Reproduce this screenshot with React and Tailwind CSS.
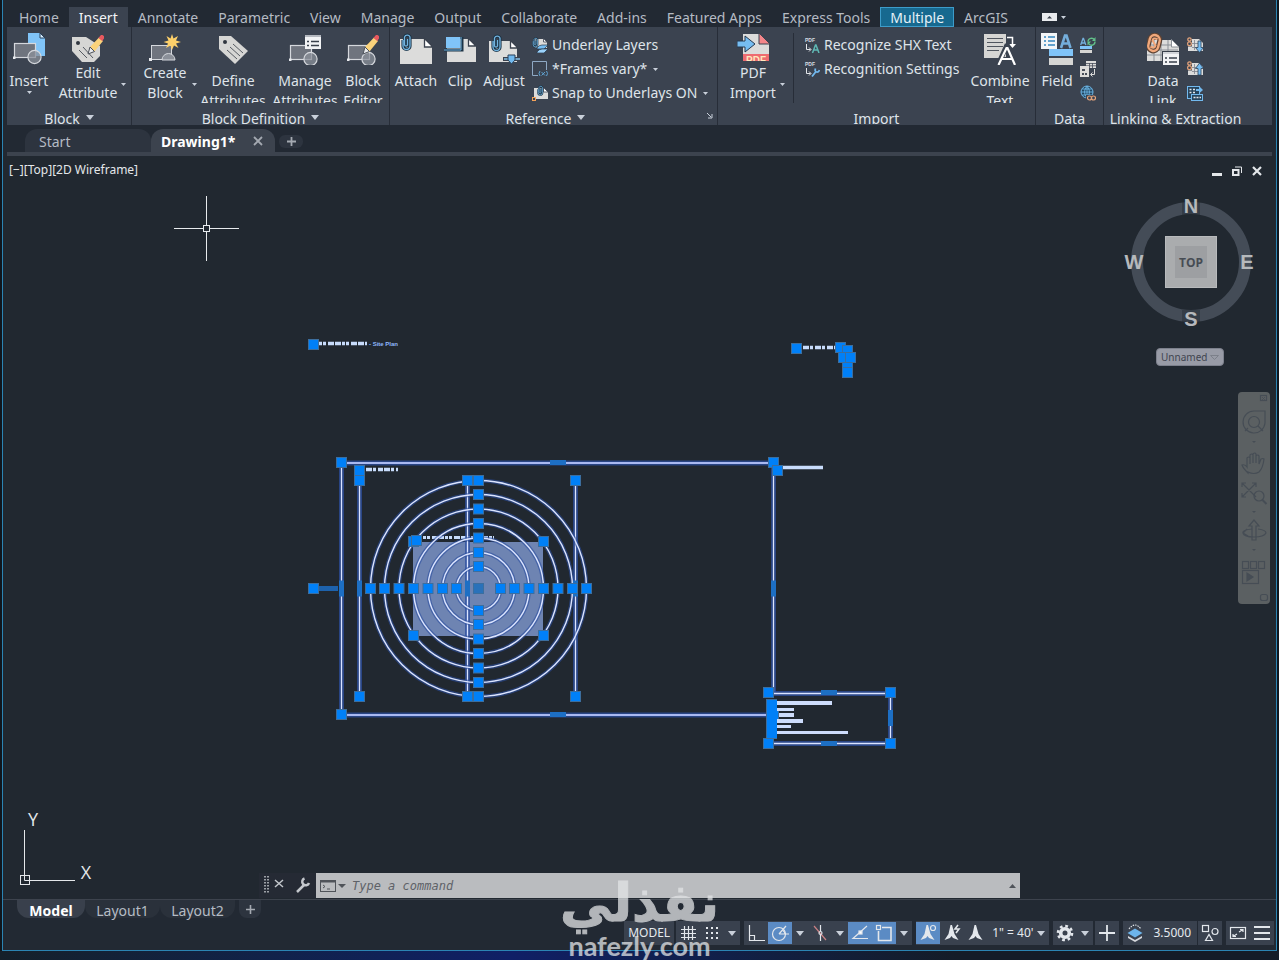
import { useState } from "react";

const tabs = [
  "Home",
  "Insert",
  "Annotate",
  "Parametric",
  "View",
  "Manage",
  "Output",
  "Collaborate",
  "Add-ins",
  "Featured Apps",
  "Express Tools",
  "Multiple",
  "ArcGIS",
];

/* ---------- small shared pieces ---------- */

function Caret({ className = "" }) {
  return (
    <svg className={`shrink-0 fill-[#c9d0da] ${className}`} width="8" height="5" viewBox="0 0 8 5">
      <path d="M0 0h8L4 5z" />
    </svg>
  );
}

function SmallCaret({ className = "" }) {
  return (
    <svg className={`shrink-0 fill-[#c9d0da] ${className}`} width="5" height="3" viewBox="0 0 5 3">
      <path d="M0 0h5L2.5 3z" />
    </svg>
  );
}

function Icon({ children, size = 32 }) {
  return (
    <svg className="shrink-0" width={size} height={size} viewBox={`0 0 ${size} ${size}`} fill="none">
      {children}
    </svg>
  );
}

/* ---------- ribbon icons ---------- */

function BlockShape({ y = 0 }) {
  return (
    <g transform={`translate(0 ${y})`} stroke="#d5d8dd" strokeWidth="1.2">
      <rect x="1.5" y="11.5" width="21" height="14" fill="#6f747e" />
      <circle cx="21.5" cy="25" r="6.6" fill="#8b9099" fillOpacity="0.75" />
      <rect x="0" y="24.5" width="2.5" height="2.5" fill="#e8eaee" stroke="none" />
    </g>
  );
}

function Pencil() {
  return (
    <g>
      <path d="M16 21l2-7L27 4.500l4 3.500-8.500 10.500z" fill="#fbd37b" />
      <path d="M16 21l2-7 4.500 4.500z" fill="#e9ebee" stroke="#4a505b" />
      <path d="M26.500 5l2-2.500c1.500-1.500 5 1 3.500 3l-1.800 2.500z" fill="#e8595f" />
    </g>
  );
}

function Clip({ x = 0, y = 0, s = 1 }) {
  return (
    <g transform={`translate(${x} ${y}) scale(${s})`} fill="none">
      <path d="M2 7v6a3.500 3.500 0 0 0 7 0V4a3 3 0 0 0-5.500 0v8a1.600 1.600 0 0 0 3 0V6" stroke="#1d3345" strokeWidth="3.200" />
      <path d="M2 7v6a3.500 3.500 0 0 0 7 0V4a3 3 0 0 0-5.500 0v8a1.600 1.600 0 0 0 3 0V6" stroke="#72b4e0" strokeWidth="1.300" />
    </g>
  );
}

function Tag() {
  return (
    <Icon>
      <path d="M2 3h12l17 15-13 13L2 16z" fill="#d6d6d4" />
      <circle cx="8" cy="9" r="2" fill="#30363f" />
      <path d="M10 17l10 9M13 14l10 9M16 11l10 9" stroke="#565b62" strokeWidth="1" />
    </Icon>
  );
}

function InsertIcon() {
  return (
    <Icon>
      <path d="M15 0h12l5 5v18H15z" fill="#80c4f8" />
      <path d="M27 0v5h5z" fill="#d8efff" stroke="#29405a" />
      <BlockShape y={-1} />
    </Icon>
  );
}

function EditAttributeIcon() {
  return (
    <Icon>
      <path d="M0 4h14l14 9v10l-6 6H10L0 18z" fill="#d6d6d4" />
      <circle cx="6" cy="10" r="2" fill="#30363f" />
      <path d="M7 17l8 8M11 14l10 11" stroke="#565b62" />
      <Pencil />
    </Icon>
  );
}

function CreateBlockIcon() {
  return (
    <Icon>
      <rect x="2.500" y="12.500" width="20" height="14" fill="#6f747e" stroke="#d5d8dd" />
      <path d="M13 27a6.500 6.500 0 0 1 13 0z" fill="#8b9099" stroke="#d5d8dd" />
      <rect x="0" y="25" width="3" height="3" fill="#e8eaee" />
      <path d="M23 1l1.500 4.500L29 3l-2 4.500 5 1.500-5 1.500L29.500 15 25 12.500 23 17l-1.500-4.500L17 15l2-4.500L14.500 9l5-1.500L17.500 3 21.500 5.500z" fill="#fdd06a" />
    </Icon>
  );
}

function ManageIcon() {
  return (
    <Icon>
      <BlockShape y={1} />
      <rect x="16" y="2" width="16" height="14" fill="#f2f3f5" />
      <path d="M16 3h16" stroke="#b4b8bf" strokeWidth="2" />
      <path d="M18 8.500h2M22 8.500h8M18 12.500h2M22 12.500h8" stroke="#39404b" strokeWidth="1.400" />
    </Icon>
  );
}

function BlockEditorIcon() {
  return (
    <Icon>
      <BlockShape y={1} />
      <Pencil />
    </Icon>
  );
}

function AttachIcon() {
  return (
    <Icon>
      <path d="M0 6h25l7 7v18H0z" fill="#dcdcdb" />
      <path d="M24.500 5.500v8.500H33z" fill="#fff" stroke="#3a414d" strokeWidth="1.300" />
      <Clip x={1} y={0} />
    </Icon>
  );
}

function ClipIcon() {
  return (
    <Icon>
      <path d="M3 6h22l7 7v16H3z" fill="#dcdcdb" />
      <path d="M24.500 5.500v7.500H32z" fill="#fff" stroke="#3a414d" strokeWidth="1.300" />
      <rect x="2" y="4" width="14" height="11" fill="#80c4f8" />
      <path d="M0 17h18V4" stroke="#1d3345" strokeWidth="3" />
      <path d="M0 17h17V4" stroke="#72b4e0" />
    </Icon>
  );
}

function AdjustIcon() {
  return (
    <Icon>
      <path d="M1 8h21l7 6v15H1z" fill="#dcdcdb" />
      <path d="M22.500 7.500v7.500H30z" fill="#fff" stroke="#3a414d" strokeWidth="1.300" />
      <path d="M15 26h17" stroke="#3a414d" strokeWidth="4" />
      <path d="M16 26h16" stroke="#8dccf5" strokeWidth="1.400" />
      <path d="M20 22h7v5l-3.500 4-3.500-4z" fill="#72b9ee" stroke="#28415a" />
      <Clip x={3} y={1} />
    </Icon>
  );
}

function PdfIcon() {
  return (
    <Icon>
      <path d="M6 1h16l10 9v12H6z" fill="#dcdcdb" />
      <path d="M22 0v11h11z" fill="#f4868a" stroke="#3b4350" />
      <rect x="6" y="21" width="26" height="7" fill="#ee6b70" />
      <text x="9" y="31" fontSize="10" fill="#ffe7bd" fontFamily="Liberation Sans" fontWeight="bold">PDF</text>
      <path d="M0 8h8V3l10 8-10 8v-5H0z" fill="#76bdf2" stroke="#263a50" />
      <rect x="0" y="28" width="32" height="4" fill="#3b4350" />
    </Icon>
  );
}

function CombineIcon() {
  return (
    <Icon>
      <rect x="0" y="1" width="22" height="24" fill="#d6d6d4" />
      <path d="M3 5.500h16M3 9.500h16M3 13.500h16M3 17.500h12" stroke="#50565f" />
      <path d="M23 4.500h5.500V13" stroke="#fff" strokeWidth="1.500" />
      <path d="M25 11h7l-3.500 4z" fill="#fff" />
      <path d="M13.500 33L22.500 13h1L32 33M17 26.500h12" stroke="#3b4350" strokeWidth="5" />
      <path d="M14.500 32L22.500 15h1L31 32M18 26h10" stroke="#fff" strokeWidth="2.200" />
    </Icon>
  );
}

function FieldIcon() {
  return (
    <Icon>
      <rect x="0" y="0" width="16" height="16" fill="#f3f5f7" />
      <path d="M3 4h2M7 4h7M3 8h2M7 8h7M3 12h2M7 12h7" stroke="#3585bf" strokeWidth="1.600" />
      <path d="M20 15l4-12.500h1.500L29.500 15M21.500 10.500h7" stroke="#74aedb" strokeWidth="2.600" />
      <rect x="8" y="16" width="24" height="7" fill="#80c4f8" />
      <rect x="8" y="25" width="24" height="7" fill="#d6d6d4" />
    </Icon>
  );
}

function DataLinkIcon() {
  return (
    <Icon>
      <path d="M0 7h24l8 7v14H0z" fill="#dcdcdb" />
      <path d="M0 12h24M0 17h31M0 22h31M7 7v21M14 7v21M21 7v21" stroke="#8a8f96" />
      <path d="M24.500 6.500V14H32z" fill="#fff" stroke="#8a8f96" />
      <g transform="rotate(14 7 10)">
        <rect x="2" y="2" width="10" height="16" rx="5" stroke="#5d4334" strokeWidth="5" />
        <rect x="2" y="2" width="10" height="16" rx="5" stroke="#f1a87b" strokeWidth="2.400" />
        <path d="M9.500 5.500q-5-1-4.500 2.500l4 4q0 3.500-4.500 2.500" stroke="#f1a87b" strokeWidth="2" />
      </g>
      <rect x="15.500" y="18.500" width="17" height="14" fill="#f2f3f5" stroke="#39404b" />
      <path d="M16 20h16" stroke="#b4b8bf" />
      <path d="M18 25h2M22 25h8M18 29h2M22 29h8" stroke="#39404b" strokeWidth="1.400" />
    </Icon>
  );
}

function UnderlayLayersIcon() {
  return (
    <Icon size={16}>
      <path d="M3 2h9l3 3v6H3z" fill="#dcdcdb" />
      <path d="M11.500 1.500V5H15z" fill="#fff" stroke="#3b4350" strokeWidth="0.800" />
      <path d="M5 11q2-3 5-3h6l-4 4H5z" fill="#76bdf2" stroke="#22384c" strokeWidth="0.700" />
      <path d="M5 15q2-3 5-3h6l-4 4H5z" fill="#9ad1fa" stroke="#22384c" strokeWidth="0.700" />
      <Clip x={0} y={0} s={0.6} />
    </Icon>
  );
}

function FramesIcon() {
  return (
    <Icon size={16}>
      <path d="M6 14.500H.5V.500h14V9" stroke="#8fa9c4" />
      <path d="M8 10q-2 2.500 0 5M14.500 10q2 2.500 0 5M9.500 11l3.500 3.500M13 11l-3.500 3.500" stroke="#5fa3d2" />
    </Icon>
  );
}

function SnapIcon() {
  return (
    <Icon size={16}>
      <path d="M2 3h10l4 4v7H2z" fill="#dcdcdb" />
      <path d="M11.500 2.500V7H16z" fill="#fff" stroke="#3b4350" strokeWidth="0.800" />
      <rect x="0.500" y="12.500" width="3" height="3" fill="#3b4350" stroke="#f4a259" />
      <Clip x={5} y={0} s={0.6} />
    </Icon>
  );
}

function ShxIcon({ wrench }) {
  return (
    <Icon size={16}>
      <text x="1" y="5" fontSize="5" fontWeight="bold" fill="#d8dce2" fontFamily="Liberation Sans">PDF</text>
      <path d="M2.500 7v5.500h4M5 10.500l2 2-2 2" stroke="#e3e6ea" />
      {wrench ? (
        <path d="M8 15.500l4-5M11.500 7.500q-1 3 1 3.500t3-2" stroke="#72b9ee" strokeWidth="1.800" />
      ) : (
        <path d="M8.500 16l3-8h.5l3 8M9.500 13h5" stroke="#5fb8b4" strokeWidth="1.500" />
      )}
    </Icon>
  );
}

function UpdateFieldIcon() {
  return (
    <Icon size={16}>
      <path d="M.700 8L3 1.500h.500L5.800 8M1.500 6h3.500" stroke="#74aedb" strokeWidth="1.300" />
      <path d="M8 4.500a3.500 3.500 0 0 1 6.500-1.500M15 4.500a3.500 3.500 0 0 1-6.500 2" stroke="#62c08a" strokeWidth="1.300" />
      <path d="M15.500 0v4H12zM7.500 8.500v-4H11z" fill="#62c08a" />
      <rect x="0" y="9" width="12" height="3" fill="#80c4f8" />
      <rect x="0" y="13" width="12" height="3" fill="#d6d6d4" />
    </Icon>
  );
}

function OleIcon() {
  return (
    <Icon size={16}>
      <rect x="6" y="0" width="10" height="7" fill="#dcdcdb" />
      <path d="M6 2.500h10M6 4.800h10M9.500 2v5M12.500 2v5" stroke="#474e5a" strokeWidth="0.800" />
      <rect x="0" y="5" width="9" height="11" fill="#dcdcdb" />
      <path d="M2 8h3v2H2zM2 12h2v2H2zM5 12h2v2H5z" fill="#474e5a" />
      <path d="M14.500 8v5.500H11M12.500 11.500l-2 2 2 2" stroke="#dcdcdb" />
    </Icon>
  );
}

function HyperlinkIcon() {
  return (
    <Icon size={16}>
      <circle cx="7" cy="7" r="6" fill="#23465f" stroke="#6cb4e4" />
      <path d="M1 7h12M7 1v12M2 4h10M2 10h10M7 1q-5 6 0 12M7 1q5 6 0 12" stroke="#6cb4e4" strokeWidth="0.900" />
      <rect x="6" y="10" width="10" height="6" fill="#3b4350" />
      <circle cx="9.500" cy="13" r="2" stroke="#e5a47b" strokeWidth="1.200" />
      <circle cx="13.500" cy="13" r="2" stroke="#e5a47b" strokeWidth="1.200" />
    </Icon>
  );
}

function LinkTransferIcon({ up }) {
  return (
    <Icon size={16}>
      <path d="M1 2h11l4 4v8H1z" fill="#dcdcdb" />
      <path d="M5 6.500h8M5 10.500h8M7.500 3v10" stroke="#7d828a" strokeWidth="0.800" />
      <rect x="0" y="0" width="5" height="9.500" fill="#3b4350" />
      <circle cx="2.500" cy="2.500" r="1.700" stroke="#e5a47b" strokeWidth="1.200" />
      <circle cx="2.500" cy="6.700" r="1.900" stroke="#e5a47b" strokeWidth="1.200" />
      {up ? (
        <path d="M11 14V7.500H8.500L12.500 2l4 5.500H14V14z" fill="#76bdf2" stroke="#2a415a" strokeWidth="0.800" />
      ) : (
        <path d="M11 4v6.500H8.500l4 5 4-5H14V4z" fill="#76bdf2" stroke="#2a415a" strokeWidth="0.800" />
      )}
    </Icon>
  );
}

function ExtractIcon() {
  return (
    <Icon size={16}>
      <rect x="0.500" y="1.500" width="12" height="12" fill="#27455d" stroke="#72b9ee" />
      <path d="M2.500 4.500h2M6 4.500h2M2.500 7.500h2M6 7.500h2" stroke="#e3e6ea" strokeWidth="1.500" />
      <path d="M9 4h3V1l4 4-4 3.500V6H9z" fill="#72b9ee" />
      <rect x="4.500" y="9.500" width="11" height="6" fill="#27455d" stroke="#72b9ee" />
      <path d="M6.500 12.500h2M9.500 12.500h2M12.500 12.500h1.500" stroke="#e3e6ea" strokeWidth="1.500" />
    </Icon>
  );
}

/* ---------- ribbon ---------- */

function Panel({ title, caret, launcher, className, children }) {
  return (
    <section className={`relative flex flex-col border-r border-[#272d38] ${className}`}>
      <div className="flex h-[76px] overflow-hidden pt-1.5">{children}</div>
      <div
        className={`mt-1 flex h-[17px] items-start justify-center gap-1.5 overflow-hidden leading-6 ${launcher ? "pr-4" : ""}`}
      >
        <span>{title}</span>
        {caret && <Caret className="mt-2" />}
      </div>
      {launcher && (
        <button aria-label={`${title} settings`} className="absolute right-1 bottom-1.5">
          <svg width="7" height="7" viewBox="0 0 7 7" fill="none" stroke="#c9d0da">
            <path d="M1 1l4 4M6 2v4H2" />
          </svg>
        </button>
      )}
    </section>
  );
}

// tight = icon sits close to a two-line label, otherwise the second line runs under the panel title
function BigButton({ icon, lines, tight, caret, below, className }) {
  return (
    <>
      <button className={`flex shrink-0 flex-col items-center leading-5 ${className}`}>
        {icon}
        <span className={tight ? "-mt-0.5 block" : "mt-1.5 block"}>
          {lines.map((l) => (
            <span key={l} className="block whitespace-nowrap">
              {l}
            </span>
          ))}
        </span>
        {below && <SmallCaret />}
      </button>
      {caret && <SmallCaret className="mt-[50px]" />}
    </>
  );
}

function RowButton({ icon, label, caret }) {
  return (
    <button className="flex h-6 items-center gap-1 whitespace-nowrap">
      {icon}
      <span>{label}</span>
      {caret && <SmallCaret className="ml-0.5" />}
    </button>
  );
}

function IconButton({ label, children }) {
  return (
    <button aria-label={label} className="flex h-6 items-center">
      {children}
    </button>
  );
}

function Ribbon() {
  return (
    <div className="mx-1 flex h-[98px] overflow-hidden bg-[#3b4350] text-[#dfe4ea]">
      <Panel title="Block" caret className="w-[125px]">
        <BigButton icon={<InsertIcon />} lines={["Insert"]} below className="w-11" />
        <BigButton icon={<EditAttributeIcon />} lines={["Edit", "Attribute"]} tight caret className="ml-1 w-[66px]" />
      </Panel>
      <Panel title="Block Definition" caret className="w-[258px]">
        <BigButton icon={<CreateBlockIcon />} lines={["Create", "Block"]} tight caret className="ml-1.5 w-[54px]" />
        <BigButton icon={<Tag />} lines={["Define", "Attributes"]} className="w-[72px]" />
        <BigButton icon={<ManageIcon />} lines={["Manage", "Attributes"]} className="w-[72px]" />
        <BigButton icon={<BlockEditorIcon />} lines={["Block", "Editor"]} className="w-11" />
      </Panel>
      <Panel title="Reference" caret launcher className="w-[328px]">
        <BigButton icon={<AttachIcon />} lines={["Attach"]} className="ml-0.5 w-12" />
        <BigButton icon={<ClipIcon />} lines={["Clip"]} className="w-10" />
        <BigButton icon={<AdjustIcon />} lines={["Adjust"]} className="w-12" />
        <div className="ml-1">
          <RowButton icon={<UnderlayLayersIcon />} label="Underlay Layers" />
          <RowButton icon={<FramesIcon />} label="*Frames vary*" caret />
          <RowButton icon={<SnapIcon />} label="Snap to Underlays ON" caret />
        </div>
      </Panel>
      <Panel title="Import" className="w-[318px]">
        <BigButton icon={<PdfIcon />} lines={["PDF", "Import"]} tight caret className="ml-2 w-[54px]" />
        <div className="ml-2 w-px shrink-0 bg-[#272d38]" />
        <div className="ml-2.5">
          <RowButton icon={<ShxIcon />} label="Recognize SHX Text" />
          <RowButton icon={<ShxIcon wrench />} label="Recognition Settings" />
        </div>
        <BigButton icon={<CombineIcon />} lines={["Combine", "Text"]} className="ml-auto w-[70px]" />
      </Panel>
      <Panel title="Data" className="w-[68px]">
        <BigButton icon={<FieldIcon />} lines={["Field"]} className="w-[42px]" />
        <div className="ml-0.5">
          <IconButton label="Update Fields"><UpdateFieldIcon /></IconButton>
          <IconButton label="OLE Object"><OleIcon /></IconButton>
          <IconButton label="Hyperlink"><HyperlinkIcon /></IconButton>
        </div>
      </Panel>
      <div className="flex-1">
        <Panel title="Linking & Extraction" className="w-[144px] border-transparent">
          <BigButton icon={<DataLinkIcon />} lines={["Data", "Link"]} className="ml-9 w-[46px]" />
          <div className="ml-px">
            <IconButton label="Download from Source"><LinkTransferIcon /></IconButton>
            <IconButton label="Upload to Source"><LinkTransferIcon up /></IconButton>
            <IconButton label="Extract Data"><ExtractIcon /></IconButton>
          </div>
        </Panel>
      </div>
    </div>
  );
}

/* ---------- drawing ---------- */

const CX = 478.5;
const CY = 588.5;
const radii = [22, 36, 50.5, 65, 79.5, 94, 108];

function Grip({ x, y, dim }) {
  return (
    <rect x={x - 5} y={y - 5} width="10" height="10" fill={dim ? "#2a72ba" : "#0080f8"} stroke="#3c6e9e" />
  );
}

// midpoint grips are thin bars along the edge
function MidGrip({ x, y, vertical }) {
  return vertical ? (
    <rect x={x - 2.5} y={y - 8} width="5" height="16" fill="#1d6fc4" />
  ) : (
    <rect x={x - 8} y={y - 2.5} width="16" height="5" fill="#1d6fc4" />
  );
}

function Glow({ d, bold }) {
  return (
    <g fill="none">
      <path d={d} stroke="#2c4fa0" strokeOpacity="0.75" strokeWidth="5" />
      <path d={d} stroke={bold ? "#a9b9f0" : "#dbe4ff"} strokeWidth={bold ? 2 : 1.3} />
    </g>
  );
}

function Drawing() {
  return (
    <svg className="absolute top-0 left-0" width="1270" height="743" viewBox="3 156 1270 743">
      {/* cursor */}
      <g stroke="#e8ebee" fill="none">
        <path d="M174 228.500h29M210 228.500h29M206.500 196v29M206.500 232v29" />
        <rect x="203.500" y="225.500" width="6" height="6" />
      </g>

      {/* annotation text too small to read at this zoom */}
      <g stroke="#c8dcfb" strokeWidth="3.500">
        <path d="M319 343.500h48" strokeDasharray="3 1 3 2 6 1 6 1" />
        <path d="M803 347.500h33" strokeDasharray="6 1 3 2" />
        <path d="M366 469.500h32" strokeDasharray="6 1 3 2 5 1" />
        <path d="M783 467.500h40" />
      </g>
      <text x="369" y="345.500" fontSize="6" fontWeight="bold" fill="#8fb8fb" fontFamily="Liberation Sans">
        - Site Plan
      </text>

      {/* hatch */}
      <rect x="413" y="542" width="130" height="94" fill="#6e84b2" />
      <path d="M423 537.500h71" stroke="#c8dcfb" strokeWidth="3" strokeDasharray="3 1 3 2 6 1 5 1" />

      {/* frames */}
      <Glow d="M341.500 463H773.500M341.500 715H773.500" bold />
      <Glow d="M341.500 462.500V714.500M773.500 462.500V692.500M359.500 480V696M467.500 480V696M575.500 480V696" />
      <Glow d="M768.500 693.500H890.500V743.500H768.500" />

      {radii.map((r) => (
        <g key={r} fill="none">
          <circle cx={CX} cy={CY} r={r} stroke="#2c4fa0" strokeOpacity="0.6" strokeWidth="4" />
          <circle cx={CX} cy={CY} r={r} stroke="#dbe4ff" strokeWidth="1.400" />
        </g>
      ))}

      <rect x="318" y="586" width="20" height="5" fill="#1d62ac" />
      {[341.5, 359.5, 467.5, 575.5, 773.5].map((x) => (
        <MidGrip key={x} x={x} y={588.5} vertical />
      ))}
      <MidGrip x={558} y={462.5} />
      <MidGrip x={558} y={714.5} />
      <MidGrip x={829} y={692.5} />
      <MidGrip x={829} y={743.5} />
      <MidGrip x={890.5} y={718} vertical />

      {radii.map((r) => (
        <g key={r}>
          <Grip x={CX - r} y={CY} />
          <Grip x={CX + r} y={CY} />
          <Grip x={CX} y={CY - r} />
          <Grip x={CX} y={CY + r} />
        </g>
      ))}
      <Grip x={CX} y={CY} dim />

      {[
        [313.5, 344.5], [313.5, 588.5], [341.5, 462.5], [341.5, 714.5], [773.5, 462.5], [777.5, 470.5],
        [359.5, 470.5], [359.5, 480.5], [359.5, 696.5], [467.5, 480.5], [467.5, 696.5], [575.5, 480.5],
        [575.5, 696.5], [413.5, 541.5], [416.5, 540.5], [543.5, 541.5], [413.5, 635.5], [543.5, 635.5],
        [796.5, 348.5], [840.5, 347.5], [847.5, 350.5], [843.5, 357.5], [850.5, 357.5], [847.5, 367.5],
        [847.5, 372.5], [771.5, 704.5], [771.5, 709.5], [771.5, 719.5], [771.5, 726.5], [771.5, 733.5],
        [773.5, 714.5], [768.5, 692.5], [890.5, 692.5], [768.5, 743.5], [890.5, 743.5],
      ].map(([x, y]) => (
        <Grip key={`${x}-${y}`} x={x} y={y} />
      ))}
      <rect x="767" y="700" width="10" height="38" fill="#0080f8" />

      {/* title block rows */}
      <g fill="#cddcfb">
        <rect x="777" y="701" width="55" height="4" />
        <rect x="777" y="708" width="17" height="3" />
        <rect x="779" y="713" width="15" height="4" />
        <rect x="777" y="719" width="26" height="4" />
        <rect x="777" y="725" width="14" height="3" />
        <rect x="777" y="731" width="71" height="3" />
      </g>
    </svg>
  );
}

function UcsIcon() {
  return (
    <svg className="absolute bottom-3 left-3" width="86" height="78" viewBox="15 809 86 78" fill="none" stroke="#e4e7ea">
      <rect x="20.500" y="875.500" width="9" height="9" />
      <path d="M24.500 830V880.500H75" />
      <g stroke="none" fill="#e4e7ea" fontFamily="Open Sans" fontWeight="400" fontSize="18" textAnchor="middle">
        <text x="33" y="826">Y</text>
        <text x="86" y="879">X</text>
      </g>
    </svg>
  );
}

function ViewCube() {
  return (
    <div className="absolute top-9 right-[19px] flex w-[134px] flex-col items-center">
      <svg width="134" height="142" viewBox="1123 192 134 142">
        <circle cx="1191" cy="262" r="54" fill="none" stroke="#444c57" strokeWidth="12" />
        <g fill="#212830">
          <rect x="1182" y="197" width="18" height="20" fillOpacity="0.4" />
          <rect x="1182" y="310" width="18" height="20" fillOpacity="0.4" />
        </g>
        <rect x="1165.500" y="236.500" width="51" height="51" fill="#aaacae" stroke="#b8babc" />
        <rect x="1175" y="246" width="32" height="32" fill="#9d9fa2" />
        <g fontFamily="Liberation Sans" fontWeight="bold" textAnchor="middle">
          <g fontSize="20" fill="#b6b9bc">
            <text x="1191" y="213">N</text>
            <text x="1191" y="326">S</text>
            <text x="1134" y="269">W</text>
            <text x="1247" y="269">E</text>
          </g>
          <text x="1191" y="267" fontSize="12" fill="#474c54" fontFamily="Open Sans">TOP</text>
        </g>
      </svg>
      <button className="mt-3.5 flex h-[18px] w-[68px] items-center justify-between rounded-sm border border-[#7c808c] bg-[#989ba6] px-1 text-[10px] text-[#40444f]">
        Unnamed
        <svg width="9" height="5" viewBox="0 0 9 5" fill="none" stroke="#7c808a">
          <path d="M.5.500h8l-4 4z" />
        </svg>
      </button>
    </div>
  );
}

function NavBar() {
  return (
    <div className="absolute top-[236px] right-1.5 rounded-sm bg-[#5b6062]">
      <svg width="32" height="212" viewBox="0 0 32 212" fill="none" stroke="#464d55" strokeWidth="1.200">
        <rect x="22.500" y="3.500" width="6" height="5" />
        <path d="M24 5l3 3M27 5l-3 3" strokeWidth="0.800" />
        <path d="M16 19h11v12a11 11 0 1 1-11-12z" />
        <circle cx="16" cy="30" r="5.500" />
        <path d="M10 36l-3 3M20 34l5 5" />
        <path d="M10 81q-5-5-6-8 3-1 5 2V66q2-2 3 0v6-9q2-2 3 0v8-9q2-2 3 0v9-7q2-2 3 0v8l2-5q2-1 3 0-1 9-5 13-5 3-11 0z" />
        <path d="M4 91l14 14M18 91L4 105M4 95v-4h4M14 91h4v4M4 101v4h4" />
        <circle cx="21" cy="104" r="5" />
        <path d="M24.500 108l4 4" strokeWidth="2" />
        <path d="M14 148v-14h-3l5-6 5 6h-3v14z" />
        <path d="M14 137q-10 1-9 4 1 4 11 4t12-4q0-3-8-4M5 141l4-4M5 141l5 3" />
        <rect x="4.500" y="169.500" width="6" height="7" />
        <rect x="12.500" y="169.500" width="6" height="7" />
        <rect x="20.500" y="169.500" width="6" height="7" />
        <rect x="4.500" y="178.500" width="16" height="13" />
        <path d="M9 181v8l6-4z" fill="#464d55" />
        <rect x="22.500" y="202.500" width="7" height="6" rx="2" />
        <g fill="#464d55" stroke="none">
          <path d="M14 49h4l-2 2zM14 119h4l-2 2zM14 157h4l-2 2z" />
        </g>
      </svg>
    </div>
  );
}

function CommandLine() {
  return (
    <div className="absolute inset-x-64 bottom-px flex h-[25px] items-stretch bg-[#252a34]">
      <svg className="mt-[3px] ml-1" width="53" height="20" viewBox="263 877 53 20" fill="none" stroke="#c3c7cc">
        <path d="M265 877v17M268 877v17" strokeWidth="1.500" strokeDasharray="1.500 1.500" />
        <path d="M275 881l8 7M283 881l-8 7" strokeWidth="1.500" />
        <path d="M297 893l7-7" strokeWidth="2.500" />
        <path d="M304.500 879.500a3.500 3.500 0 1 0 4.500 4.500" strokeWidth="2.500" />
      </svg>
      <div className="flex flex-1 items-center bg-[#babcbf] px-1">
        <svg width="16" height="12" viewBox="0 0 16 12" fill="none" stroke="#50545a">
          <rect x="0.500" y="0.500" width="15" height="11" />
          <path d="M0 1.500h16" strokeWidth="2" />
          <path d="M3 5l2 1.500L3 8M7 9h3" />
        </svg>
        <svg className="ml-0.5" width="8" height="4" viewBox="0 0 8 4" fill="#50545a">
          <path d="M0 0h8L4 4z" />
        </svg>
        <input
          aria-label="Command"
          placeholder="Type a command"
          className="ml-1.5 min-w-0 flex-1 bg-transparent font-['DejaVu_Sans_Mono',monospace] text-xs italic outline-none placeholder:text-[#5e6268]"
        />
        <svg width="7" height="4" viewBox="0 0 7 4" fill="#50545a">
          <path d="M0 4h7L3.500 0z" />
        </svg>
      </div>
    </div>
  );
}

/* ---------- status bar ---------- */

function Group({ children }) {
  return <div className="flex h-6 items-center bg-[#39414e]">{children}</div>;
}

function Toggle({ label, on, children }) {
  return (
    <button
      aria-label={label}
      aria-pressed={!!on}
      className={`flex h-6 w-6 items-center justify-center ${on ? "border-y border-[#39414e] bg-[#5b8bc4]" : ""}`}
    >
      <svg width="20" height="20" viewBox="0 0 20 20" fill="none" stroke="#e3e7ec" strokeWidth="1.200">
        {children}
      </svg>
    </button>
  );
}

function Drop({ label }) {
  return (
    <button aria-label={label} className="flex h-6 w-4 items-center justify-center">
      <Caret />
    </button>
  );
}

function Person() {
  return <path d="M8.500 2h1.500l2.500 9 4 6-5.500-2-1.500-2-1.500 2-5.500 2 4-6z" fill="#e3e7ec" stroke="none" />;
}

function StatusBar() {
  return (
    <div className="mt-[3px] mr-0.5 flex justify-end gap-1 text-xs text-[#e6eaee]">
      <div className="flex gap-0.5">
        <Group>
          <button className="px-1">MODEL</button>
        </Group>
        <Group>
          <Toggle label="Grid">
            <path d="M6.500 3v14M10.500 3v14M14.500 3v14M3 6.500h15M3 10.500h15M3 14.500h15" />
          </Toggle>
          <Toggle label="Snap">
            <path d="M4 5h14M4 10h14M4 15h14" strokeWidth="2" strokeDasharray="2 3" />
          </Toggle>
          <Drop label="Snap options" />
        </Group>
      </div>
      <Group>
        <Toggle label="Ortho">
          <path d="M3.500 2v15.500H19M3.500 12.500h5v5" />
        </Toggle>
        <Toggle label="Polar tracking" on>
          <circle cx="9" cy="11" r="6.500" />
          <path d="M9 11h10M9 11l7-8M13 7.500q2 1.500 2 3.500" />
        </Toggle>
        <Drop label="Polar options" />
        <Toggle label="Isometric">
          <path d="M4 3l12 14" stroke="#c98184" />
          <path d="M10.500 2v6M10.500 12v6" />
          <circle cx="10.500" cy="10" r="1.500" />
        </Toggle>
        <Drop label="Isometric options" />
        <Toggle label="Object snap tracking" on>
          <path d="M17 3L3 15.500h15" />
          <rect x="9" y="8" width="3" height="3" fill="#fff" />
        </Toggle>
        <Toggle label="Object snap" on>
          <path d="M8 4.500h9v13H4.500V8" strokeWidth="1.600" />
          <rect x="2.500" y="2.500" width="4" height="4" />
        </Toggle>
        <Drop label="Object snap options" />
      </Group>
      <Group>
        <Toggle label="Annotation visibility" on>
          <Person />
          <circle cx="15" cy="5" r="2.500" />
        </Toggle>
        <Toggle label="Auto scale">
          <Person />
          <path d="M16 2l-3 4h4l-3 4" strokeWidth="1.600" />
        </Toggle>
        <Toggle label="Annotation scale">
          <Person />
        </Toggle>
        <button className="pl-1">1&quot; = 40&apos;</button>
        <Drop label="Scale list" />
      </Group>
      <div className="flex gap-0.5">
        <Group>
          <Toggle label="Workspace">
            <circle cx="10" cy="10" r="4.300" strokeWidth="3.600" />
            <circle cx="10" cy="10" r="7" strokeWidth="2.600" strokeDasharray="2.750 2.750" />
          </Toggle>
          <Drop label="Workspace options" />
        </Group>
        <Group>
          <Toggle label="Annotation monitor">
            <path d="M10 2v16M2 10h16" strokeWidth="1.800" />
          </Toggle>
        </Group>
      </div>
      <div className="flex gap-px">
        <Group>
          <Toggle label="Units">
            <path d="M3 13l7 4 7-4v2l-7 4-7-4z" fill="#d5d8dd" stroke="none" />
            <path d="M2.500 10L10 5.500l7.500 4.500-7.500 4.500z" fill="#6db5ec" stroke="none" />
            <path d="M4 6q6-8 12 0" strokeDasharray="1.500 1" />
          </Toggle>
          <button className="px-1.5">3.5000</button>
        </Group>
        <Group>
          <Toggle label="Isolate objects">
            <rect x="2.500" y="2.500" width="6" height="6" />
            <circle cx="15" cy="8.500" r="3" />
            <path d="M5.500 17.500h7L9 11.500z" />
          </Toggle>
        </Group>
      </div>
      <Group>
        <Toggle label="Clean screen">
          <rect x="2.500" y="4.500" width="15" height="11" />
          <path d="M11 9l4-2.500M12 6.500h3V9M9 11l-4 2.500M5 11v2.500h3" />
        </Toggle>
        <Toggle label="Customization">
          <path d="M2 4h16M2 10h16M2 16h16" strokeWidth="2" />
        </Toggle>
      </Group>
    </div>
  );
}

export default function App() {
  const [active, setActive] = useState("Insert");

  const tabClass = (t) => {
    if (t === "Multiple") return "border-[#3d9cc9] bg-[#17698f] text-[#e6f1f7]";
    if (t === active) return "border-transparent bg-[#3b4350] text-[#f2f4f6]";
    return "border-transparent text-[#b5bbc4]";
  };

  return (
    <div className="relative flex min-h-screen flex-col overflow-hidden bg-[#10161d] font-['Noto_Sans',sans-serif] text-sm">
      <div className="mx-0.5 flex flex-1 flex-col border-x border-b border-[#2b84b3] bg-[#222933]">
        <nav className="flex items-end px-1.5 pt-[7px]">
          {tabs.map((t) => (
            <button
              key={t}
              onClick={() => setActive(t)}
              className={`h-5 border px-[9px] leading-5 whitespace-nowrap ${tabClass(t)}`}
            >
              {t}
            </button>
          ))}
          <button aria-label="Minimize ribbon" className="ml-6 flex h-5 items-center gap-1">
            <svg width="15" height="8" viewBox="0 0 15 8">
              <rect width="15" height="8" fill="#e9ebee" />
              <path d="M5 5.500h5L7.500 3z" fill="#39404b" />
            </svg>
            <SmallCaret />
          </button>
        </nav>

        <Ribbon />

        <div className="mx-1 mt-1 flex h-[23px] items-stretch pl-[18px]">
          <button className="w-[126px] rounded-t-xl bg-[#2d343f] pt-0.5 pl-3.5 text-left text-[#b5bbc4]">Start</button>
          <div className="flex w-[124px] items-center justify-between rounded-t-xl bg-[#3c434e] pr-3 pl-2.5">
            <button className="pt-0.5 font-bold text-white">Drawing1*</button>
            <button aria-label="Close drawing">
              <svg width="10" height="10" viewBox="0 0 10 10" stroke="#a4a9b1" strokeWidth="1.800">
                <path d="M1 1l8 8M9 1L1 9" />
              </svg>
            </button>
          </div>
          <button aria-label="New drawing" className="mt-1.5 mb-1 ml-1 flex w-6 items-center justify-center rounded-md bg-[#2d343f]">
            <svg width="9" height="9" viewBox="0 0 9 9" stroke="#a4a9b1" strokeWidth="1.800">
              <path d="M4.500 0v9M0 4.500h9" />
            </svg>
          </button>
        </div>
        <div className="mx-1 h-1 bg-[#3c434e]" />

        <main className="relative flex-1 bg-[#212830]">
          <Drawing />
          <div className="absolute top-1.5 left-1.5 text-xs text-[#e4e7ea]">[−][Top][2D Wireframe]</div>
          <div className="absolute top-2.5 right-3.5 flex items-center gap-2.5">
            <button aria-label="Minimize">
              <svg width="10" height="10" viewBox="0 0 10 10"><path d="M0 7h10v3H0z" fill="#e4e7ea" /></svg>
            </button>
            <button aria-label="Restore">
              <svg width="10" height="10" viewBox="0 0 10 10" fill="none" stroke="#e4e7ea">
                <path d="M3 1h6.500v6" />
                <rect x="1" y="4" width="5.500" height="5" strokeWidth="2" />
              </svg>
            </button>
            <button aria-label="Close">
              <svg width="10" height="10" viewBox="0 0 10 10" stroke="#e4e7ea" strokeWidth="2.200">
                <path d="M1 1l8 8M9 1L1 9" />
              </svg>
            </button>
          </div>
          <ViewCube />
          <NavBar />
          <UcsIcon />
          <CommandLine />
        </main>

        <footer className="h-[51px] border-t border-[#3d434d]">
          <div className="flex h-[18px] items-stretch pl-[14px] leading-[22px]">
            <button className="w-[68px] rounded-b-xl bg-[#39404c] font-bold text-white">Model</button>
            <button className="w-[75px] rounded-b-xl bg-[#2a313b] text-[#b5bbc4]">Layout1</button>
            <button className="w-[75px] rounded-b-xl bg-[#2a313b] text-[#b5bbc4]">Layout2</button>
            <button aria-label="New layout" className="ml-1 flex w-[22px] items-center justify-center rounded-b-lg bg-[#2d343f]">
              <svg width="9" height="9" viewBox="0 0 9 9" stroke="#a4a9b1" strokeWidth="1.600">
                <path d="M4.500 0v9M0 4.500h9" />
              </svg>
            </button>
          </div>
          <StatusBar />
        </footer>
      </div>
      <div className="h-[9px] bg-linear-to-r from-[#15202a] via-[#101f66] via-40% to-[#141c28] to-75%" />

      {/* watermark */}
      <div className="pointer-events-none absolute inset-x-0 bottom-0 flex flex-col items-center text-[#e2e4e6] opacity-75">
        <div
          dir="rtl"
          className="font-['DejaVu_Sans',sans-serif] text-[52px] leading-[58px] font-bold [-webkit-text-stroke:1px_#e2e4e6]"
        >
          نفذلي
        </div>
        <div className="font-['Lato',sans-serif] text-[27px] leading-7 font-bold">nafezly.com</div>
      </div>
    </div>
  );
}
